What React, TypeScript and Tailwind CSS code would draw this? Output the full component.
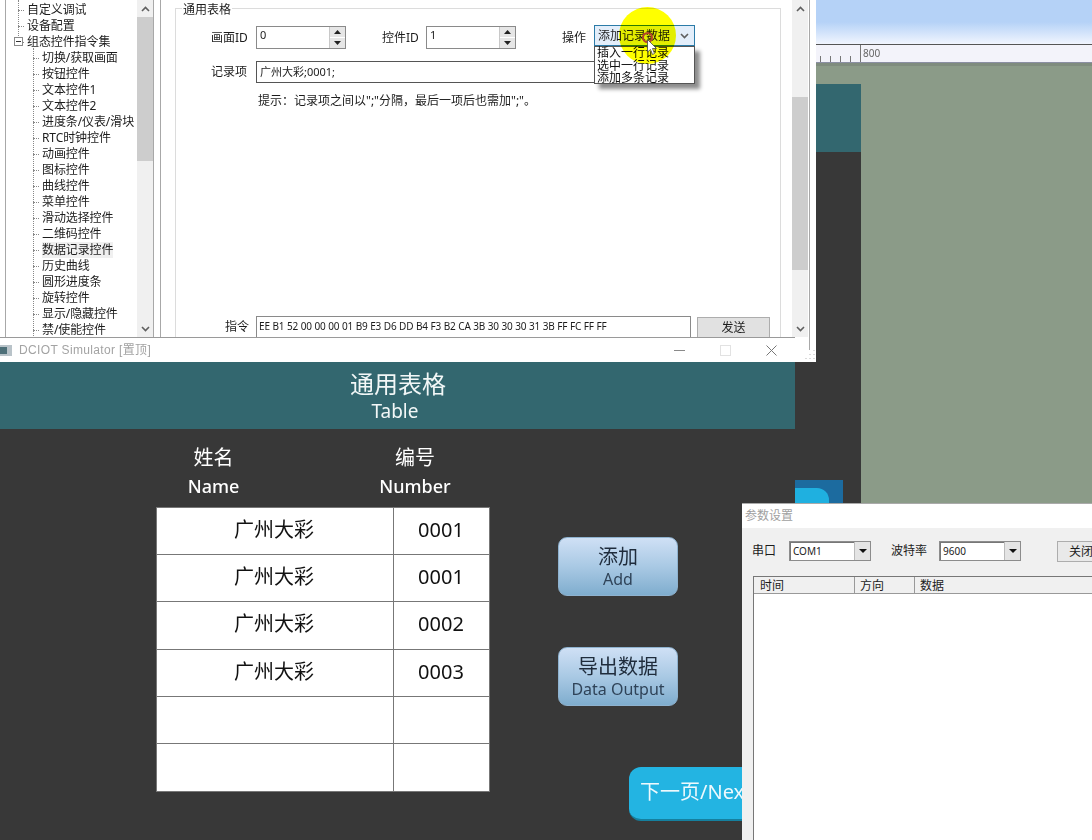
import React from "react";

const CJK = "font-['Noto_Sans','Noto_Sans_CJK_SC',sans-serif]";

const tree: [string, number, boolean?][] = [
  ["自定义调试", 1],
  ["设备配置", 1],
  ["组态控件指令集", 1],
  ["切换/获取画面", 2],
  ["按钮控件", 2],
  ["文本控件1", 2],
  ["文本控件2", 2],
  ["进度条/仪表/滑块", 2],
  ["RTC时钟控件", 2],
  ["动画控件", 2],
  ["图标控件", 2],
  ["曲线控件", 2],
  ["菜单控件", 2],
  ["滑动选择控件", 2],
  ["二维码控件", 2],
  ["数据记录控件", 2, true],
  ["历史曲线", 2],
  ["圆形进度条", 2],
  ["旋转控件", 2],
  ["显示/隐藏控件", 2],
  ["禁/使能控件", 2],
];

function Chevron({ up, className = "" }: { up?: boolean; className?: string }) {
  return (
    <svg width="9" height="6" viewBox="0 0 9 6" className={className}>
      <path d={up ? "M1 5 L4.5 1.5 L8 5" : "M1 1 L4.5 4.5 L8 1"} fill="none" stroke="#5f5f5f" strokeWidth="1.6" />
    </svg>
  );
}

function Scrollbar({ thumbTop, thumbHeight, className = "" }: { thumbTop: string; thumbHeight: string; className?: string }) {
  return (
    <div className={`flex flex-col items-center bg-[#f0f0f0] w-[16px] shrink-0 ${className}`}>
      <div className="h-[17px] flex items-center justify-center shrink-0">
        <Chevron up />
      </div>
      <div className={`w-full bg-[#cdcdcd] shrink-0 ${thumbTop} ${thumbHeight}`} />
      <div className="flex-1" />
      <div className="h-[17px] flex items-center justify-center shrink-0">
        <Chevron />
      </div>
    </div>
  );
}

function Spinner({ value }: { value: string }) {
  return (
    <div className="w-[90px] h-[23px] border border-[#8a8a8a] bg-white flex justify-between">
      <span className="pl-[3px] text-[11px] leading-[16px] text-[#222]">{value}</span>
      <div className="w-[16px] flex flex-col gap-px bg-white border-l border-[#c8c8c8]">
        <div className="flex-1 bg-[#e6e6e6] flex items-center justify-center">
          <svg width="7" height="4" viewBox="0 0 7 4"><path d="M3.5 0 L7 4 L0 4 Z" fill="#222" /></svg>
        </div>
        <div className="flex-1 bg-[#e6e6e6] flex items-center justify-center">
          <svg width="7" height="4" viewBox="0 0 7 4"><path d="M0 0 L7 0 L3.5 4 Z" fill="#222" /></svg>
        </div>
      </div>
    </div>
  );
}

function OldCombo({ value, width }: { value: string; width: string }) {
  return (
    <div className={`${width} h-[20px] border border-[#8c8c8c] shadow-[inset_1px_1px_0_#777] bg-white flex justify-between`}>
      <span className="pl-[3px] text-[10px] leading-[18px] text-[#222]">{value}</span>
      <div className="w-[16px] bg-[#e4e4e4] border-l border-[#bbb] flex items-center justify-center">
        <svg width="8" height="4" viewBox="0 0 8 4"><path d="M0 0 L8 0 L4 4 Z" fill="#111" /></svg>
      </div>
    </div>
  );
}

function WindowButtons() {
  return (
    <div className="flex items-center gap-[35px] pr-[18px]">
      <svg width="11" height="11" viewBox="0 0 11 11"><path d="M0 5.5 H11" stroke="#8a8a8a" /></svg>
      <svg width="11" height="11" viewBox="0 0 11 11"><rect x="0.5" y="0.5" width="10" height="10" fill="none" stroke="#e2e2e2" /></svg>
      <svg width="11" height="11" viewBox="0 0 11 11"><path d="M0.5 0.5 L10.5 10.5 M10.5 0.5 L0.5 10.5" stroke="#777" /></svg>
    </div>
  );
}

function ActionButton({ zh, en }: { zh: string; en: string }) {
  return (
    <div className="w-[120px] h-[59px] rounded-[9px] bg-gradient-to-b from-[#cfe0f5] via-[#a9c9e4] to-[#7fadce] border border-[#8eb2cf] flex flex-col items-center justify-center text-[#1f2c3c]">
      <span className="text-[20px] leading-[24px]">{zh}</span>
      <span className="text-[16px] leading-[20px] text-[#2f4358]">{en}</span>
    </div>
  );
}

const rows: [string, string][] = [
  ["广州大彩", "0001"],
  ["广州大彩", "0001"],
  ["广州大彩", "0002"],
  ["广州大彩", "0003"],
  ["", ""],
  ["", ""],
];

export default function App() {
  return (
    <div className={`relative w-[1092px] h-[840px] overflow-hidden bg-[#8b9b88] ${CJK}`}>
      {/* Designer canvas behind the windows */}
      <div className="absolute left-0 top-0 w-full h-[44px] bg-gradient-to-b from-[#b5d2f7] from-50% to-[#f1f5fe]" />
      <div className="absolute left-[816px] top-[44px] w-[276px] h-[19px] bg-[#f3f3fa] border-t border-[#555] border-b border-b-[#8b8fa3]">
        <span className="absolute left-[47px] top-[2px] text-[10px] leading-[12px] text-[#666]">800</span>
        <svg width="50" height="17" className="absolute left-0 top-0">
          <path d="M4.5 11V17M14.5 11V17M24.5 11V17M34.5 11V17M44.5 0V17" stroke="#777" />
        </svg>
      </div>
      <div className="absolute left-[816px] top-[63px] w-[276px] h-[3px] bg-[#7f8c7e]" />
      <div className="absolute left-[795px] top-[84px] w-[66px] h-[756px] bg-[#383838]">
        <div className="h-[68px] bg-[#33676f]" />
      </div>
      <div className="absolute left-[795px] top-[480px] w-[48px] h-[23px] bg-[#1c6b9f] overflow-hidden">
        <div className="w-[34px] h-[40px] mt-[8px] rounded-tr-[12px] bg-[#1fb0e0]" />
      </div>

      {/* Configuration tool window */}
      <div className="absolute left-0 top-0 w-[816px] h-[362px] bg-white flex text-[12px] leading-[16px] text-[#1c1c1c]">
        <div className="w-[149px] h-[337px] ml-[5px] border-x border-[#a8a8a8] flex shrink-0">
          <div className="relative flex-1 pt-[2px]">
            <div className="absolute left-[12px] top-0 h-[44px] border-l border-dotted border-[#888]" />
            <div className="absolute left-[27px] top-[48px] h-[290px] border-l border-dotted border-[#888]" />
            <div className="absolute left-[8px] top-[37px] w-[9px] h-[9px] border border-[#8a8a8a] bg-white flex items-center justify-center">
              <div className="w-[5px] h-px bg-[#333]" />
            </div>
            {tree.map(([label, level, selected]) => (
              <div key={label} className={`flex items-center h-[16px] ${level === 1 ? "pl-[12px]" : "pl-[27px]"}`}>
                <div className="w-[6px] border-t border-dotted border-[#888] mr-[3px] shrink-0" />
                <span className={`whitespace-nowrap tracking-[-0.1px] ${selected ? "bg-[#f0f0f0]" : ""}`}>{label}</span>
              </div>
            ))}
          </div>
          <Scrollbar thumbTop="mt-0" thumbHeight="h-[144px]" />
        </div>
        <div className="w-[7px] shrink-0 border-r border-[#a8a8a8] h-[337px]" />
        <div className="flex-1 pl-[14px] pr-[11px] h-[337px] overflow-hidden">
          <fieldset className="border border-[#dcdcdc] h-[360px] pl-[6px] -mt-px">
            <legend className="px-px pt-[3px] text-[12px] leading-[16px] ml-0">通用表格</legend>
            <div className="flex items-center -ml-[6px] pl-[35px] mt-[8px]">
              <span className="w-[45px]">画面ID</span>
              <Spinner value="0" />
              <span className="w-[44px] ml-[36px]">控件ID</span>
              <Spinner value="1" />
              <span className="ml-[46px] w-[32px]">操作</span>
              <div className="w-[101px] h-[21px] -mt-[4px] border border-[#2b7ba8] bg-[#e3eefa] flex items-center justify-between pl-[3px] pr-[4px]">
                <span className="whitespace-nowrap">添加记录数据</span>
                <Chevron className="mr-px" />
              </div>
            </div>
            <div className="flex items-center -ml-[6px] pl-[35px] mt-[12px]">
              <span className="w-[45px]">记录项</span>
              <div className="w-[435px] h-[22px] border border-[#555] pl-[3px] leading-[19px]">
                <span className="text-[11px]">广州大彩;0001;</span>
              </div>
            </div>
            <div className="-ml-[6px] pl-[82px] mt-[10px]">提示：记录项之间以";"分隔，最后一项后也需加";"。</div>
            <div className="flex items-start -ml-[6px] pl-[49px] mt-[207px]">
              <span className="w-[31px] pt-[3px]">指令</span>
              <div className="w-[435px] h-[24px] border border-[#8a8a8a] pl-[2px] text-[10px] leading-[18px] whitespace-nowrap tracking-[-0.1px]">
                EE B1 52 00 00 00 01 B9 E3 D6 DD B4 F3 B2 CA 3B 30 30 30 31 3B FF FC FF FF
              </div>
              <div className="w-[73px] h-[22px] ml-[6px] mt-px bg-[#e1e1e1] border border-[#adadad] text-center leading-[20px]">发送</div>
            </div>
          </fieldset>
        </div>
        <Scrollbar thumbTop="mt-[80px]" thumbHeight="h-[173px]" className="h-[337px] mr-px" />
        <div className="w-[7px] border-l border-[#a8a8a8] h-[350px]" />
      </div>

      {/* Open combo list and mouse highlight, over the tool window */}
      <div className="absolute left-[594px] top-[46px] w-[101px] h-[38px] bg-white border border-[#555] shadow-[5px_5px_4px_rgba(0,0,0,0.45)] text-[12px] leading-[12.5px] text-[#111] pl-[2px] whitespace-nowrap">
        <div>插入一行记录</div>
        <div>选中一行记录</div>
        <div>添加多条记录</div>
      </div>
      <div className="absolute left-[619px] top-[7px] w-[57px] h-[57px] rounded-full bg-[#ffff00] mix-blend-multiply" />
      <div className="absolute left-[642px] top-[32px] w-[11px] h-[11px] rounded-full border-2 border-[#b5432c]" />
      <svg className="absolute left-[647px] top-[39px]" width="11" height="17" viewBox="0 0 11 17">
        <path d="M0.5 0.5 V13 L3.5 10.5 L5.5 15.5 L7.5 14.5 L5.5 9.5 H9.5 Z" fill="#fff" stroke="#444" strokeWidth="0.8" />
      </svg>
      <svg className="absolute left-[803px] top-[350px]" width="12" height="10" viewBox="0 0 12 10">
        <path d="M10.5 0.5h1M10.5 4.5h1M6.5 4.5h1M10.5 8.5h1M6.5 8.5h1M2.5 8.5h1" stroke="#b5b5b5" />
      </svg>

      {/* Simulator window */}
      <div className="absolute left-0 top-[337px] w-[795px] h-[503px] bg-[#383838] flex flex-col">
        <div className="h-[25px] bg-white flex items-center justify-between shrink-0 border-t border-[#9a9a9a]">
          <div className="flex items-center">
            <svg width="13" height="11" viewBox="0 0 13 11" className="mr-[6px]">
              <rect x="0" y="0" width="12" height="11" fill="#b9c3c9" />
              <rect x="0" y="2" width="7" height="7" fill="#4d6f78" />
            </svg>
            <span className="text-[12px] text-[#a3a3a3] tracking-[0.35px] font-['Liberation_Sans','Noto_Sans_CJK_SC',sans-serif]">DCIOT Simulator [置顶]</span>
          </div>
          <WindowButtons />
        </div>
        <div className="h-[67px] bg-[#33676f] text-[#f2f7f7] flex flex-col items-center shrink-0 pt-[7px]">
          <span className="text-[24px] leading-[30px] ml-[1px]">通用表格</span>
          <span className="text-[19px] leading-[24px] -ml-[5px]">Table</span>
        </div>
        <div className="flex pl-[156px] pt-[13px] text-white">
          <div>
            <div className="grid grid-cols-[237px_97px] h-[65px] text-[20px] leading-[28px] text-center">
              <div className="flex flex-col items-center -ml-[119px] w-[353px] pt-[2px]">
                <span>姓名</span>
                <span className="text-[18px] leading-[28px] font-medium">Name</span>
              </div>
              <div className="flex flex-col items-center ml-[-48px] w-[140px] pt-[2px]">
                <span>编号</span>
                <span className="text-[18px] leading-[28px] font-medium">Number</span>
              </div>
            </div>
            <div className="w-[334px] h-[285px] bg-white border border-[#777] grid grid-cols-[237px_1fr] grid-rows-6 text-[#111] text-[20px]">
              {rows.map(([name, no], i) => (
                <React.Fragment key={i}>
                  <div className={`flex items-center justify-center pb-[2px] pr-[2px] border-r border-[#777] ${i < 5 ? "border-b" : ""} border-b-[#777]`}>{name}</div>
                  <div className={`flex items-center justify-center pb-[2px] pr-[1px] ${i < 5 ? "border-b" : ""} border-b-[#777]`}>{no}</div>
                </React.Fragment>
              ))}
            </div>
          </div>
          <div className="ml-[68px] mt-[95px] flex flex-col gap-[51px]">
            <ActionButton zh="添加" en="Add" />
            <ActionButton zh="导出数据" en="Data Output" />
            <div className="w-[140px] h-[54px] ml-[71px] mt-[10px] pb-[3px] rounded-[12px] bg-[#23b4e2] border-b-2 border-[#15809f] text-[#eef9fd] text-[20px] flex items-center pl-[11px] whitespace-nowrap">下一页/Next</div>
          </div>
        </div>
      </div>

      {/* Serial port window */}
      <div className="absolute left-[742px] top-[503px] w-[350px] h-[337px] bg-[#f0f0f0] flex flex-col text-[12px] text-[#1c1c1c]">
        <div className="h-[25px] bg-white flex items-center pl-[3px] text-[#a0a0a0] shrink-0 border-t border-[#aaa]">参数设置</div>
        <div className="flex items-center pl-[10px] mt-[13px] h-[20px] shrink-0">
          <span className="w-[37px] shrink-0 whitespace-nowrap">串口</span>
          <OldCombo value="COM1" width="w-[82px] shrink-0" />
          <span className="ml-[20px] w-[48px] shrink-0 whitespace-nowrap">波特率</span>
          <OldCombo value="9600" width="w-[82px] shrink-0" />
          <div className="ml-[36px] w-[60px] h-[21px] shrink-0 border border-[#adadad] bg-[#e9e9e9] pl-[11px] leading-[19px] whitespace-nowrap">关闭串口</div>
        </div>
        <div className="ml-[11px] mt-[15px] flex-1 border-l border-t border-[#777] bg-white flex flex-col">
          <div className="h-[17px] bg-[#f0f0f0] flex border-b border-[#999] leading-[17px] shrink-0">
            <span className="w-[101px] pl-[6px] border-r border-[#999] shrink-0">时间</span>
            <span className="w-[60px] pl-[5px] border-r border-[#999] shrink-0">方向</span>
            <span className="pl-[5px]">数据</span>
          </div>
        </div>
      </div>
    </div>
  );
}
